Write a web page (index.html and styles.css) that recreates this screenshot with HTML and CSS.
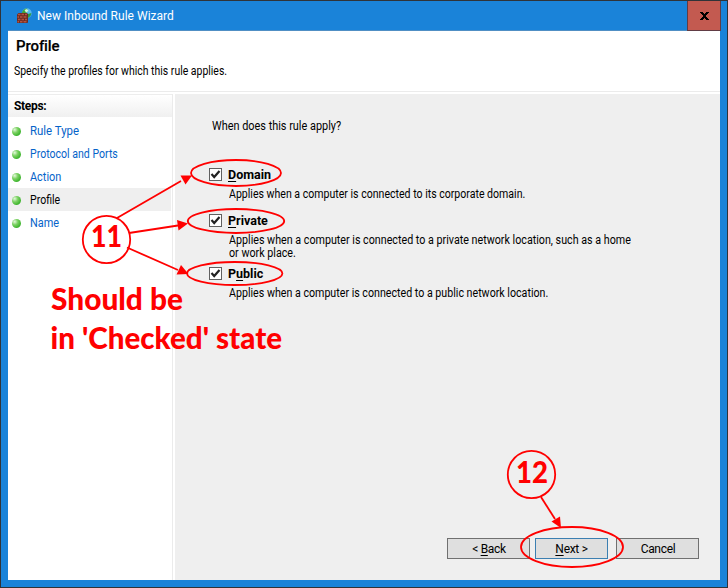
FILE: index.html
```html
<!DOCTYPE html>
<html lang="en">
<head>
<meta charset="utf-8">
<title>New Inbound Rule Wizard</title>
<link rel="stylesheet" href="styles.css">
</head>
<body>
<div class="window">
  <header class="titlebar">
    <svg class="app-icon" width="16" height="16" viewBox="0 0 16 16">
      <circle cx="10.8" cy="5.200" r="4.900" fill="#58b9ee"/>
      <path d="M6 4Q8 0 11 .5L12 3L10 5L8 7L6 6Z" fill="#3da53a"/>
      <path d="M12 6L15.500 5L14.500 8L12 10Z" fill="#2f9a44"/>
      <path d="M8.500 2L11 1L12.500 3L10 4.500Z" fill="#d6f5e4"/>
      <path d="M1 6.500L2.500 5H11L12 6V14.500L11 15H1Z" fill="#6d2b22"/>
      <path d="M2 6.500H4.500M5.500 6.500H8M9 6.500H11M1.500 9H3M4 9H6.500M7.500 9H10.500M2 11.500H4.500M5.500 11.500H8M9 11.500H11M1.500 13.800H3M4 13.800H6.500M7.500 13.800H10.500" stroke="#b4543f" stroke-width="1.4"/>
    </svg>
    <span class="caption">New Inbound Rule Wizard</span>
    <button class="close" aria-label="Close"><svg width="9" height="8" viewBox="0 0 9 8" shape-rendering="crispEdges"><path d="M0 0H3V1H4V2H5V1H6V0H9V1H8V2H7V3H6V5H7V6H8V7H9V8H6V7H5V6H4V7H3V8H0V7H1V6H2V5H3V3H2V2H1V1H0Z" fill="#000"/></svg></button>
  </header>
  <div class="client">
    <div class="heading">
      <h1>Profile</h1>
      <p><span class="narrow specify">Specify the profiles for which this rule applies.</span></p>
    </div>
    <div class="body">
      <nav class="steps">
        <h2>Steps:</h2>
        <ul>
          <li><i></i><span class="narrow wide">Rule Type</span></li>
          <li><i></i><span class="narrow">Protocol and Ports</span></li>
          <li><i></i><span class="narrow mid">Action</span></li>
          <li class="current"><i></i><span class="narrow">Profile</span></li>
          <li><i></i><span class="narrow mid">Name</span></li>
        </ul>
      </nav>
      <main class="page">
        <p class="question"><span class="narrow mid">When does this rule apply?</span></p>
        <section class="option domain">
          <label><span class="box"><svg width="11" height="11" viewBox="0 0 11 11"><path d="M1.500 5L4.200 8L9.500 2" fill="none" stroke="#222" stroke-width="2.2"/></svg></span><b><u>D</u>omain</b></label>
          <p><span class="narrow">Applies when a computer is connected to its corporate domain.</span></p>
        </section>
        <section class="option private">
          <label><span class="box"><svg width="11" height="11" viewBox="0 0 11 11"><path d="M1.500 5L4.200 8L9.500 2" fill="none" stroke="#222" stroke-width="2.2"/></svg></span><b><u>P</u>rivate</b></label>
          <p><span class="narrow place">Applies when a computer is connected to a private network location, such as a home<br>or work place.</span></p>
        </section>
        <section class="option public">
          <label><span class="box"><svg width="11" height="11" viewBox="0 0 11 11"><path d="M1.500 5L4.200 8L9.500 2" fill="none" stroke="#222" stroke-width="2.2"/></svg></span><b>P<u>u</u>blic</b></label>
          <p><span class="narrow pub">Applies when a computer is connected to a public network location.</span></p>
        </section>
        <footer class="actions">
          <button class="back"><span>&lt; <u>B</u>ack</span></button>
          <button class="next"><span><u>N</u>ext &gt;</span></button>
          <button class="cancel"><span>Cancel</span></button>
        </footer>
      </main>
    </div>
  </div>
  <svg class="callouts" width="728" height="588" viewBox="0 0 728 588">
    <g class="stroke">
      <ellipse cx="236" cy="173" rx="45" ry="13"/>
      <ellipse cx="236" cy="221" rx="48.2" ry="12"/>
      <ellipse cx="234.7" cy="273.5" rx="47.7" ry="11.5"/>
      <circle cx="106.5" cy="239.5" r="23.7"/>
      <path d="M117 218L181 181M129 233L178 225.500M127 247.500L178 270"/>
      <circle cx="531.5" cy="474.500" r="23.7"/>
      <path d="M541 497L555 519"/>
      <ellipse cx="572" cy="547" rx="51" ry="20"/>
    </g>
    <g class="fill">
      <path d="M192 175.500L185.500 184.500L180.500 175.500Z"/>
      <path d="M188 223.500L178.500 230.500L177 220Z"/>
      <path d="M188.500 274L176.500 274.500L181 265Z"/>
      <path d="M561 528L551.500 521.500L560 516.500Z"/>
      <text x="91" y="247" textLength="31" lengthAdjust="spacingAndGlyphs">11</text>
      <text x="516" y="483" textLength="32" lengthAdjust="spacingAndGlyphs">12</text>
      <text x="51" y="310" textLength="132" lengthAdjust="spacingAndGlyphs">Should be</text>
      <text x="50.500" y="349" textLength="231.500" lengthAdjust="spacingAndGlyphs">in 'Checked' state</text>
    </g>
  </svg>
</div>
</body>
</html>
```
FILE: styles.css
```css
* { box-sizing: border-box; }
body { margin: 0; font: 12px/14px Roboto, "Liberation Sans", sans-serif; color: #000; }
h1, h2, p, ul { margin: 0; padding: 0; font-weight: normal; }
button { font: inherit; color: #000; padding: 0; border-radius: 0; display: flex; align-items: center; justify-content: center; }
span, b, h1, h2 { white-space: nowrap; }
u { text-decoration: underline; text-underline-offset: 2px; text-decoration-thickness: 1px; text-decoration-skip-ink: none; }

/* Dialog text is set slightly condensed. */
.narrow { display: inline-block; transform: scaleX(.88); transform-origin: 0 50%; }
.narrow.mid { transform: scaleX(.908); }
.narrow.wide { transform: scaleX(.95); }
.narrow.specify { transform: scaleX(.872); }
.narrow.place { transform: scaleX(.893); }
.narrow.pub { transform: scaleX(.888); }

.window { position: relative; width: 728px; height: 588px; padding: 0 7px 7px; border: 1px solid #303338; background: #1a83d9; overflow: hidden; }
.titlebar { height: 30px; display: flex; align-items: center; padding-left: 8px; color: #fff; border-bottom: 1px solid #508fc4; }
.app-icon { margin-right: 5px; flex: none; }
.caption { letter-spacing: .02px; }
.close { width: 34px; height: 30px; margin: 0 -1px -1px auto; border: 1px solid #613c45; border-top: 0; background: #c35a50; flex: none; }

.client { width: 712px; height: 549px; background: #fff; }
.heading { height: 61px; padding: 6px 0 0 6px; border-bottom: 1px solid #ebebeb; }
.heading h1 { font-size: 15px; line-height: 18px; font-weight: 500; padding-left: 2px; -webkit-text-stroke: .2px #000; letter-spacing: -.1px; }
.heading p { margin-top: 9px; }

.body { height: 488px; padding-top: 2px; display: flex; }
.steps { width: 165px; margin-right: 2px; border-right: 1px solid #ebebeb; flex: none; }
.steps h2 { height: 23px; padding: 4px 0 0 6px; font-size: 12px; line-height: 14px; font-weight: 700; letter-spacing: -.3px; border-top: 1px solid #ededed; background: linear-gradient(#fff, #f0f0f0); }
.steps ul { list-style: none; padding-top: 2px; }
.steps li { height: 23px; display: flex; align-items: center; padding-left: 4px; color: #0563c9; }
.steps li i { width: 9px; height: 9px; margin: 1px 9px 0 0; border-radius: 50%; background: radial-gradient(circle at 30% 30%, #e4f8dc 0, #7bd162 35%, #3fb52f 70%, #8fcf86 100%); }
.steps li.current { background: #efefef; color: #000; margin-right: 1px; }

.page { flex: 1; display: flex; flex-direction: column; background: #efefef; padding: 25px 21px 21px 34px; }
.question { padding-left: 3px; height: 48px; }
.option label { display: flex; align-items: center; height: 16px; }
.option b { font-size: 12.5px; line-height: 16px; font-weight: 700; }
.option p { padding: 5px 0 0 20px; line-height: 13px; }
.domain { height: 46px; }
.private { height: 53px; }
.box { width: 13px; height: 13px; border: 1px solid #606060; background: #fff; margin: 0 6px 2px 0; display: flex; }
.actions { margin-top: auto; display: flex; justify-content: flex-end; }
.actions button { height: 21px; background: #dfdfdf; border: 1px solid #707070; }
.actions span { letter-spacing: -.3px; }
.actions .back { width: 83px; margin-right: 5px; padding-left: 1px; }
.actions .next { width: 73px; margin-right: 8px; border-color: #3c7fb1; }
.actions .cancel { width: 83px; padding-left: 1px; }

.callouts { position: absolute; left: -1px; top: -1px; pointer-events: none; }
.stroke { fill: none; stroke: #f00; stroke-width: 1.8; }
.fill { fill: #f00; font: 900 29.5px Lato, "Open Sans", sans-serif; }
```
